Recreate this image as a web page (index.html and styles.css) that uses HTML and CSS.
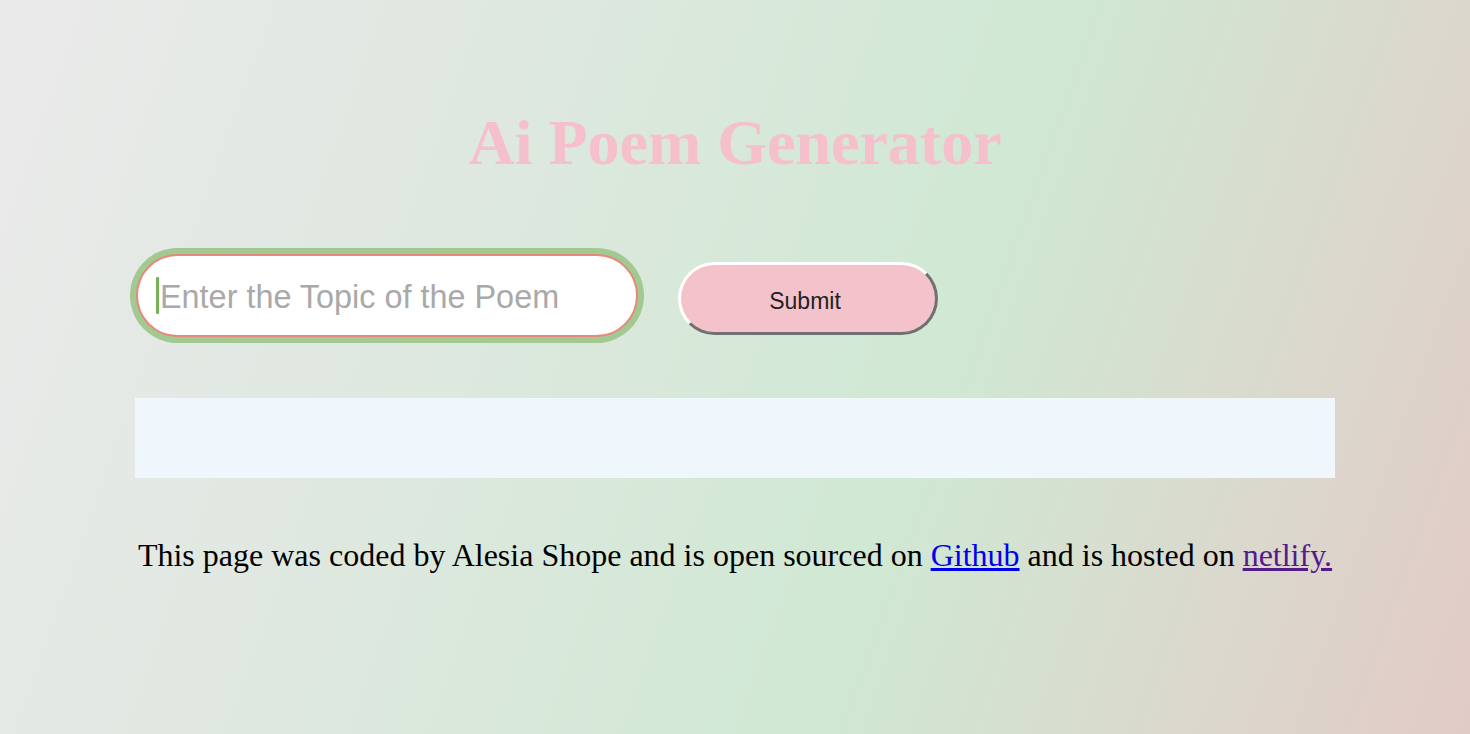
FILE: index.html
```html
<!DOCTYPE html>
<html lang="en">
<head>
<meta charset="utf-8">
<title>Ai Poem Generator</title>
<link rel="stylesheet" href="styles.css">
</head>
<body>
<div class="container">
  <h1 class="title">Ai Poem Generator</h1>
  <form class="search-form">
    <div class="input-wrap">
      <input class="topic-input" type="text" placeholder="Enter the Topic of the Poem">
      <span class="caret"></span>
    </div>
    <button class="submit-btn" type="button">Submit</button>
  </form>
  <div class="poem"></div>
  <footer class="footer">
    This page was coded by Alesia Shope and is open sourced on <a class="link" href="#">Github</a> and is hosted on <a class="link visited" href="#">netlify.</a>
  </footer>
</div>
</body>
</html>
```

FILE: styles.css
```css
html {
  min-height: 100%;
  background: linear-gradient(109.6deg, #eaeaea 0%, #dfe8e0 30%, #d0e8d4 62%, #d8dccf 78%, #e2cbc6 100%);
}

body {
  margin: 0;
  min-height: 734px;
  font-family: "Liberation Serif", "Times New Roman", serif;
}

.container {
  width: 1200px;
  margin: 0 auto;
  padding-top: 106px;
}

.title {
  margin: 0;
  font-size: 64px;
  line-height: 74px;
  font-weight: bold;
  text-align: center;
  color: #f5c0cb;
}

.search-form {
  display: flex;
  align-items: flex-start;
  gap: 40px;
  margin-top: 74px;
  margin-left: 1px;
}

.input-wrap {
  position: relative;
  display: flex;
}

.topic-input {
  box-sizing: border-box;
  width: 502px;
  height: 83px;
  padding: 4px 20px 0 22px;
  border: 2px solid #e8877a;
  border-radius: 42px;
  background: #fff;
  box-shadow: 0 0 0 6px #a2c991;
  font-family: "Liberation Sans", Arial, sans-serif;
  font-size: 32.4px;
  color: #333;
  outline: none;
}

.topic-input::placeholder {
  color: #a9a9a9;
}

.caret {
  position: absolute;
  left: 20px;
  top: 23px;
  width: 3px;
  height: 37px;
  border-radius: 1px;
  background: #72b455;
}

.submit-btn {
  box-sizing: border-box;
  width: 260px;
  height: 73px;
  margin-top: 8px;
  padding: 5px 6px 0 0;
  border: 3px solid;
  border-color: #ffffff #707070 #707070 #ffffff;
  border-radius: 37px;
  background: #f4c2cb;
  font-family: "Liberation Sans", Arial, sans-serif;
  font-size: 23px;
  color: #222;
}

.poem {
  height: 80px;
  margin-top: 61px;
  background: #eff7fd;
}

.footer {
  margin-top: 59px;
  text-align: center;
  font-size: 32px;
  line-height: 36px;
  color: #000;
}

.link {
  color: #0000ee;
}

.link.visited {
  color: #551a8b;
}
```
